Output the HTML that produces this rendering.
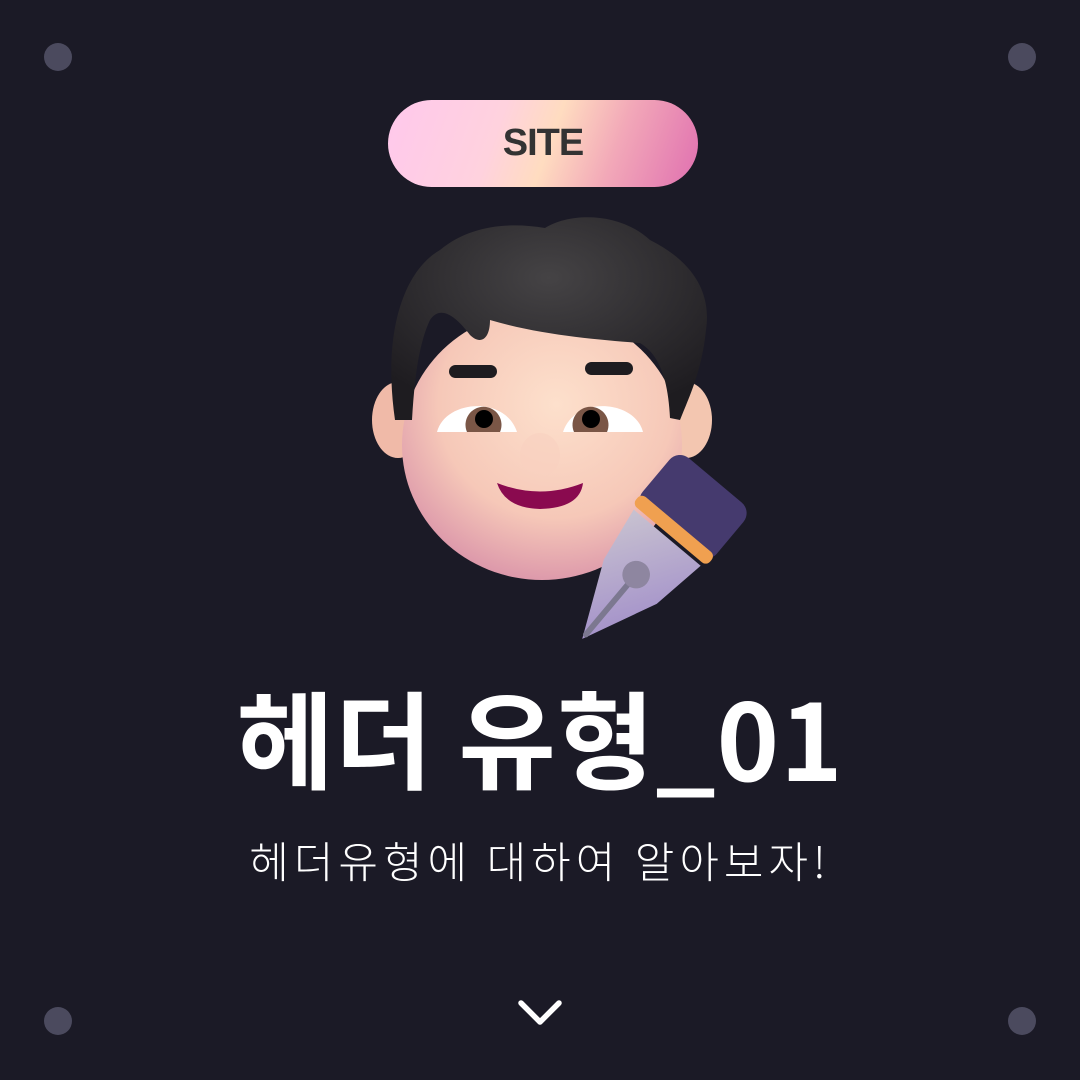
<!DOCTYPE html>
<html><head><meta charset="utf-8"><style>
html,body{margin:0;padding:0}
body{width:1080px;height:1080px;background:#1b1a26;position:relative;overflow:hidden;font-family:"Liberation Sans","Noto Sans CJK KR",sans-serif}
.dot{position:absolute;width:28px;height:28px;border-radius:50%;background:#4b4a5e}
.pill{position:absolute;left:388px;top:100px;width:310px;height:87px;border-radius:44px;background:linear-gradient(110deg,#ffc8ec 0%,#ffd2de 35%,#ffdcc0 52%,#f2a8b8 72%,#e070b0 100%);display:flex;align-items:center;justify-content:center;font-size:38px;font-weight:bold;color:#333;letter-spacing:-1px}
.title{position:absolute;left:0;right:0;top:660px;text-align:center;color:#fff;font-family:"Noto Sans CJK KR",sans-serif;font-weight:bold;font-size:106px;line-height:150px;letter-spacing:1px;white-space:nowrap}
.sub{position:absolute;left:0;right:0;top:828px;text-align:center;color:#fff;font-family:"Noto Sans CJK KR",sans-serif;font-weight:300;font-size:43px;line-height:64px;letter-spacing:5px;white-space:nowrap}
</style></head><body>
<div class="dot" style="left:44px;top:43px"></div>
<div class="dot" style="left:1008px;top:43px"></div>
<div class="dot" style="left:44px;top:1007px"></div>
<div class="dot" style="left:1008px;top:1007px"></div>
<div class="pill">SITE</div>
<svg style="position:absolute;left:0;top:0" width="1080" height="1080">
<defs>
<radialGradient id="sk" cx="0.55" cy="0.35" r="0.7"><stop offset="0" stop-color="#fde0cc"/><stop offset="0.6" stop-color="#f6c8b8"/><stop offset="1" stop-color="#d890a8"/></radialGradient>
<radialGradient id="hr" cx="0.5" cy="0.3" r="0.7"><stop offset="0" stop-color="#454345"/><stop offset="1" stop-color="#1e1c20"/></radialGradient>
<linearGradient id="nib" x1="0" y1="0" x2="1" y2="1"><stop offset="0" stop-color="#c8c2d0"/><stop offset="1" stop-color="#9a84c8"/></linearGradient>
</defs>
<ellipse cx="398" cy="420" rx="26" ry="38" fill="#f0baa8"/>
<ellipse cx="686" cy="420" rx="26" ry="38" fill="#f3c6b0"/>
<ellipse cx="542" cy="445" rx="140" ry="135" fill="url(#sk)"/>
<path d="M395 420 C382 330 405 270 440 250 C470 225 510 222 545 228 C570 212 620 212 650 240 C690 260 712 290 706 330 C702 370 690 395 680 420 L670 418 C668 380 660 355 640 343 C600 340 540 335 490 320 C490 340 480 345 470 335 C455 315 440 305 430 320 C418 345 414 385 412 420 Z" fill="url(#hr)"/>
<rect x="449" y="365" width="48" height="13" rx="6.5" fill="#1e1c20"/>
<rect x="585" y="362" width="48" height="13" rx="6.5" fill="#1e1c20"/>
<path d="M437 432 C445 400 505 395 517 432 Z" fill="#fff"/>
<path d="M563 432 C575 395 635 400 643 432 Z" fill="#fff"/>
<path d="M467 432 A18 18 0 1 1 500 432 Z" fill="#7a5646"/>
<path d="M574 432 A18 18 0 1 1 607 432 Z" fill="#7a5646"/>
<circle cx="484" cy="419" r="9" fill="#000"/>
<circle cx="591" cy="419" r="9" fill="#000"/>
<ellipse cx="540" cy="455" rx="20" ry="22" fill="#f8d0c0" opacity="0.6"/>
<path d="M497 483 Q540 500 583 483 Q580 508 540 509 Q505 508 497 483 Z" fill="#8a0a4f"/>
<g transform="translate(682 520) rotate(40) scale(1.15)">
<path d="M-38 20 L38 20 L30 70 L0 135 L-30 70 Z" fill="url(#nib)"/>
<line x1="0" y1="68" x2="0" y2="130" stroke="#7c7890" stroke-width="5" stroke-linecap="round"/>
<circle cx="0" cy="62" r="12" fill="#8e86a0"/>
<rect x="-42" y="-45" width="84" height="60" rx="12" fill="#453a6e"/>
<rect x="-42" y="5" width="84" height="12" rx="5" fill="#f0a050"/>
</g>
<polyline points="521,1003 540,1022 559,1003" fill="none" stroke="#fff" stroke-width="5.5" stroke-linecap="round" stroke-linejoin="round"/>
</svg>
<div class="title">헤더 유형_01</div>
<div class="sub">헤더유형에 대하여 알아보자!</div>
</body></html>
